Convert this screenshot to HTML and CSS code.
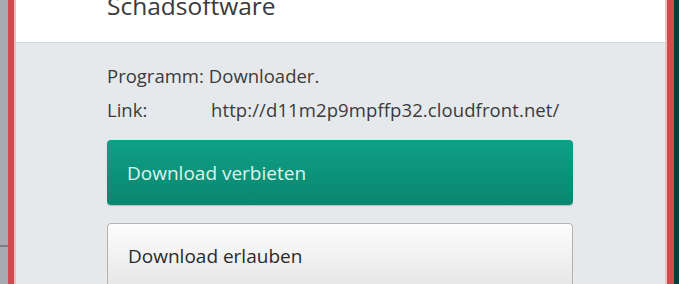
FILE: index.html
```html
<!DOCTYPE html>
<html lang="de">
<head>
    <meta charset="UTF-8">
    <meta name="viewport" content="width=device-width, initial-scale=1.0">
    <title>Schadsoftware</title>
    <link rel="stylesheet" href="styles.css">
</head>
<body>
    <div class="desktop-left"><div class="taskbar-line"></div></div>
    <div class="window-frame">
        <div class="dialog">
            <div class="dialog-header">
                <h1 class="dialog-title">Schadsoftware</h1>
            </div>
            <div class="dialog-body">
                <div class="info-row">
                    <span class="info-label">Programm:</span>
                    <span class="info-value-inline">Downloader.</span>
                </div>
                <div class="info-row">
                    <span class="info-label info-label-wide">Link:</span>
                    <span class="info-value">http://d11m2p9mpffp32.cloudfront.net/</span>
                </div>
                <button class="action-button action-block">Download verbieten</button>
                <button class="action-button action-allow">Download erlauben</button>
            </div>
        </div>
    </div>
    <div class="desktop-right"></div>
</body>
</html>
```

FILE: styles.css
```css
html, body {
    margin: 0;
    height: 100%;
    overflow: hidden;
}
body {
    display: flex;
    font-family: "Open Sans", "Noto Sans", sans-serif;
    background-color: #e5e9ec;
}
.desktop-left {
    width: 8px;
    background-color: #a9a9b1;
    padding-top: 245px;
}
.taskbar-line {
    height: 2px;
    background-color: #7c7c82;
}
.window-frame {
    width: 653px;
    background-color: #d14a4e;
    padding: 0 7px 0 6px;
    display: flex;
}
.desktop-right {
    flex: 1;
    background-color: #0c3b38;
}
.dialog {
    flex: 1;
    border-left: 2px solid #f2c2c3;
    border-right: 2px solid #f2c2c3;
    background-color: #e5e9ec;
    display: flex;
    flex-direction: column;
}
.dialog-header {
    height: 42px;
    flex-shrink: 0;
    background-color: #fff;
    border-bottom: 1px solid #d2d6d9;
    padding-left: 91px;
    overflow: hidden;
}
.dialog-title {
    margin: -6px 0 0;
    font-size: 24.5px;
    line-height: 24px;
    font-weight: normal;
    color: #3a3a3a;
}
.dialog-body {
    padding: 16px 0 0 91px;
    display: flex;
    flex-direction: column;
    align-items: flex-start;
}
.info-row {
    display: flex;
    font-size: 18.5px;
    line-height: 34px;
    color: #3b3b3b;
}
.info-label {
    margin-right: 5px;
}
.info-label-wide {
    width: 104px;
    margin-right: 0;
}
.info-value {
    letter-spacing: 0.1px;
}
.action-button {
    width: 466px;
    height: 65px;
    padding: 0 0 0 20px;
    text-align: left;
    font-family: inherit;
    font-size: 19px;
    border-radius: 4px;
    cursor: pointer;
    flex-shrink: 0;
}
.action-block {
    margin-top: 13px;
    border: none;
    color: #dcf6ee;
    background: linear-gradient(#0fa088, #0a866e);
    box-shadow: 0 1px 1px rgba(0, 0, 0, 0.2);
}
.action-allow {
    margin-top: 18px;
    border: 1px solid #b3b3b3;
    color: #2a2a2a;
    background: linear-gradient(#fdfdfd, #e6e6e6);
}
```
